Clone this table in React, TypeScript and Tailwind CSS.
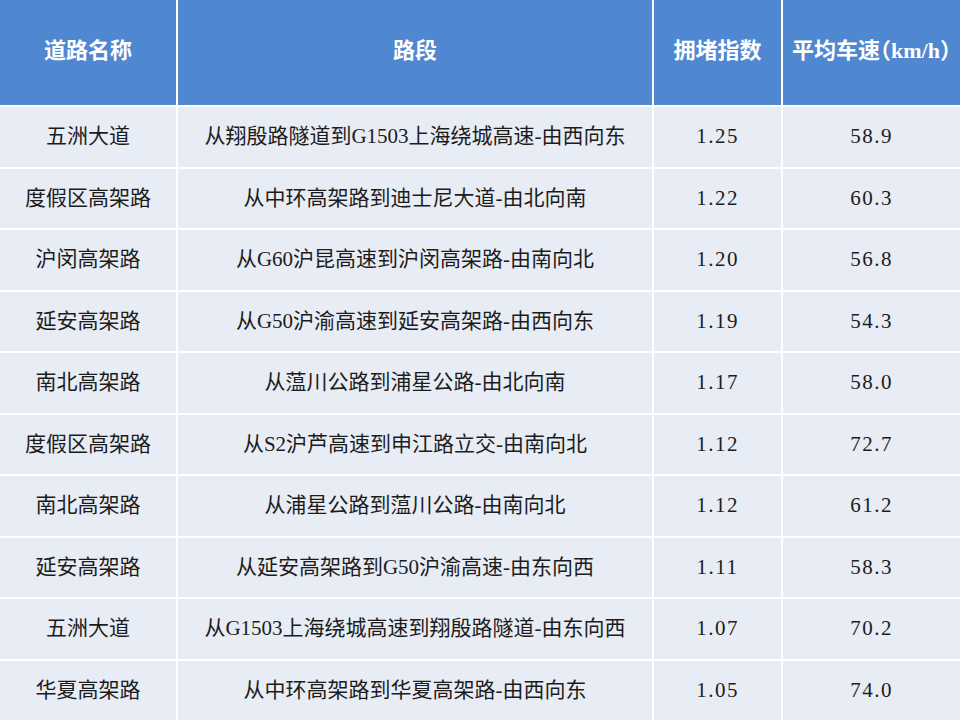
import React from 'react';

type Row = { name: string; section: string; index: string; speed: string };

const rows: Row[] = [
  { name: '五洲大道', section: '从翔殷路隧道到G1503上海绕城高速-由西向东', index: '1.25', speed: '58.9' },
  { name: '度假区高架路', section: '从中环高架路到迪士尼大道-由北向南', index: '1.22', speed: '60.3' },
  { name: '沪闵高架路', section: '从G60沪昆高速到沪闵高架路-由南向北', index: '1.20', speed: '56.8' },
  { name: '延安高架路', section: '从G50沪渝高速到延安高架路-由西向东', index: '1.19', speed: '54.3' },
  { name: '南北高架路', section: '从蕰川公路到浦星公路-由北向南', index: '1.17', speed: '58.0' },
  { name: '度假区高架路', section: '从S2沪芦高速到申江路立交-由南向北', index: '1.12', speed: '72.7' },
  { name: '南北高架路', section: '从浦星公路到蕰川公路-由南向北', index: '1.12', speed: '61.2' },
  { name: '延安高架路', section: '从延安高架路到G50沪渝高速-由东向西', index: '1.11', speed: '58.3' },
  { name: '五洲大道', section: '从G1503上海绕城高速到翔殷路隧道-由东向西', index: '1.07', speed: '70.2' },
  { name: '华夏高架路', section: '从中环高架路到华夏高架路-由西向东', index: '1.05', speed: '74.0' },
];

const headers = ['道路名称', '路段', '拥堵指数', '平均车速（km/h）'];

const head =
  'bg-[#4f87d1] text-white font-bold text-[22px] flex items-center justify-center whitespace-nowrap pb-[4px] [font-feature-settings:"halt"]';
const cell = 'bg-[#e8ecf4] text-[#1c1c1c] text-[21px] flex items-center justify-center whitespace-nowrap';
const num = 'bg-[#e8ecf4] text-[#1c1c1c] text-[21px] tracking-[1.5px] flex items-center justify-center whitespace-nowrap';

export default function App() {
  return (
    <div
      className="w-[960px] h-[720px] bg-white grid grid-cols-[176px_474px_127px_1fr] grid-rows-[105px_repeat(10,1fr)] gap-[2px] overflow-hidden"
      style={{ fontFamily: '"Liberation Serif", "Noto Sans CJK SC", serif' }}
    >
      {headers.map((h) => (
        <div key={h} className={head}>{h}</div>
      ))}
      {rows.map((r, i) => (
        <React.Fragment key={i}>
          <div className={cell}>{r.name}</div>
          <div className={cell}>{r.section}</div>
          <div className={num}>{r.index}</div>
          <div className={num}>{r.speed}</div>
        </React.Fragment>
      ))}
    </div>
  );
}
